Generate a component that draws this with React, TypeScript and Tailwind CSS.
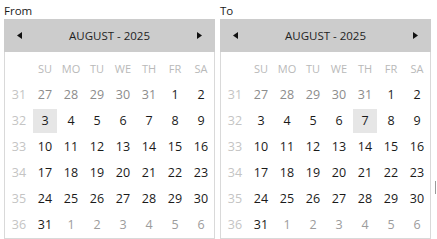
import React from "react";

type Day = { n: number; muted?: "prev" | "next" };

const weeks: { wk: number; days: Day[] }[] = [
  { wk: 31, days: [27, 28, 29, 30, 31].map((n) => ({ n, muted: "prev" as const })).concat([{ n: 1 }, { n: 2 }] as Day[]) },
  { wk: 32, days: [3, 4, 5, 6, 7, 8, 9].map((n) => ({ n })) },
  { wk: 33, days: [10, 11, 12, 13, 14, 15, 16].map((n) => ({ n })) },
  { wk: 34, days: [17, 18, 19, 20, 21, 22, 23].map((n) => ({ n })) },
  { wk: 35, days: [24, 25, 26, 27, 28, 29, 30].map((n) => ({ n })) },
  { wk: 36, days: ([{ n: 31 }] as Day[]).concat([1, 2, 3, 4, 5, 6].map((n) => ({ n, muted: "next" as const }))) },
];

const dayNames = ["SU", "MO", "TU", "WE", "TH", "FR", "SA"];

const Calendar = ({ label, selected }: { label: string; selected: number }) => {
  return (
    <div className="w-[211px] flex flex-col">
      {/* label */}
      <div className="h-[19px] text-[11.5px] leading-[19px] pt-[1px] text-[#1a1a1a]">{label}</div>

      {/* month header */}
      <div className="h-[33px] bg-[#cccccc] flex items-center justify-between px-[13px]">
        <svg width="5" height="7" viewBox="0 0 5 7">
          <path d="M5 0 L0 3.5 L5 7 Z" fill="#111" />
        </svg>
        <span className="text-[11.5px] text-[#1f1f1f]">AUGUST - 2025</span>
        <svg width="5" height="7" viewBox="0 0 5 7">
          <path d="M0 0 L5 3.5 L0 7 Z" fill="#111" />
        </svg>
      </div>

      {/* body */}
      <div className="border border-t-0 border-[#d9d9d9] pt-[5px] pl-[1px]">
        <div className="grid grid-cols-[repeat(8,26px)] h-[25px] items-center text-center text-[11px] text-[#b9b9b9]">
          <span />
          {dayNames.map((d) => (
            <span key={d}>{d}</span>
          ))}
        </div>
        {weeks.map((w) => (
          <div key={w.wk} className="grid grid-cols-[repeat(8,26px)] h-[26px] text-center text-[12.5px]">
            <span className="flex items-center justify-center text-[#c4c4c4]">{w.wk}</span>
            {w.days.map((d, i) => {
              const isSel = !d.muted && d.n === selected;
              const color =
                d.muted === "prev" ? "text-[#8c8c8c]" : d.muted === "next" ? "text-[#9c9c9c]" : "text-[#1a1a1a]";
              return (
                <span key={i} className="flex items-center justify-center p-[1px]">
                  <span
                    className={`w-full h-full flex items-center justify-center ${color} ${isSel ? "bg-[#e6e6e6]" : ""}`}
                  >
                    {d.n}
                  </span>
                </span>
              );
            })}
          </div>
        ))}
      </div>
    </div>
  );
};

export default function App() {
  return (
    <div
      className="w-[437px] h-[239px] bg-white flex gap-[5px] pl-[4px] overflow-hidden relative"
      style={{ fontFamily: '"Open Sans", "Noto Sans", sans-serif' }}
    >
      <Calendar label="From" selected={3} />
      <Calendar label="To" selected={7} />
      <div className="absolute left-[435px] top-[181px] w-[1px] h-[13px] bg-[#9a9a9a]" />
    </div>
  );
}
